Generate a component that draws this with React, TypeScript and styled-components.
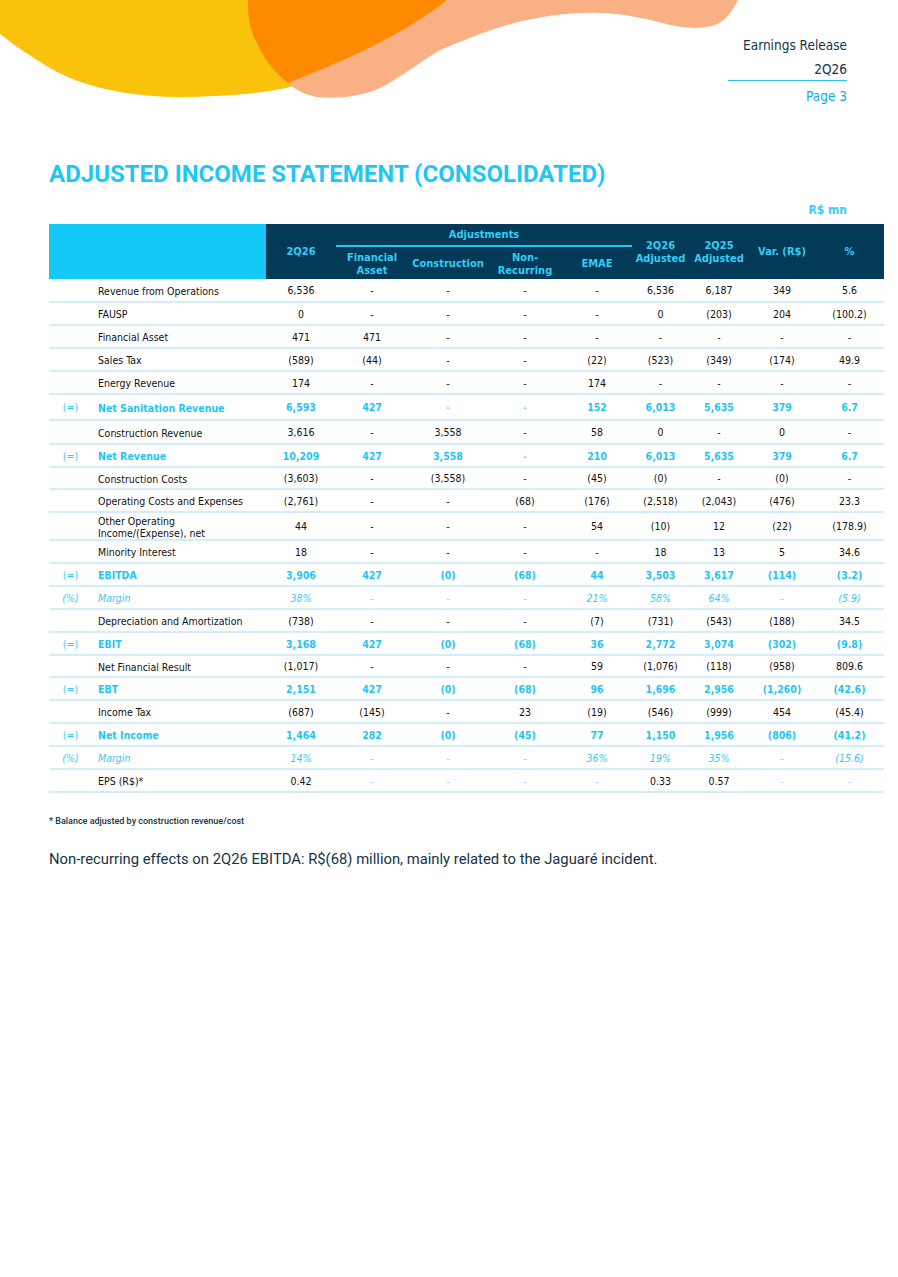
import React from 'react'
import styled, { createGlobalStyle } from 'styled-components'

const GlobalStyle = createGlobalStyle`
  body {
    margin: 0;
    background: #fff;
  }
`

const tableFont = `"DejaVu Sans Condensed", "Liberation Sans", sans-serif`
const cyan = '#1ec8f4'
const navy = '#023a58'

type Kind = 'plain' | 'total' | 'margin'

interface Row {
  prefix?: string
  label: string
  kind?: Kind
  softDash?: boolean
  tall?: number
  v: string[]
}

const rows: Row[] = [
  { label: 'Revenue from Operations', v: ['6,536', '-', '-', '-', '-', '6,536', '6,187', '349', '5.6'] },
  { label: 'FAUSP', v: ['0', '-', '-', '-', '-', '0', '(203)', '204', '(100.2)'] },
  { label: 'Financial Asset', v: ['471', '471', '-', '-', '-', '-', '-', '-', '-'] },
  { label: 'Sales Tax', v: ['(589)', '(44)', '-', '-', '(22)', '(523)', '(349)', '(174)', '49.9'] },
  { label: 'Energy Revenue', v: ['174', '-', '-', '-', '174', '-', '-', '-', '-'] },
  { prefix: '(=)', label: 'Net Sanitation Revenue', kind: 'total', tall: 26, v: ['6,593', '427', '-', '-', '152', '6,013', '5,635', '379', '6.7'] },
  { label: 'Construction Revenue', tall: 24, v: ['3,616', '-', '3,558', '-', '58', '0', '-', '0', '-'] },
  { prefix: '(=)', label: 'Net Revenue', kind: 'total', v: ['10,209', '427', '3,558', '-', '210', '6,013', '5,635', '379', '6.7'] },
  { label: 'Construction Costs', tall: 22, v: ['(3,603)', '-', '(3,558)', '-', '(45)', '(0)', '-', '(0)', '-'] },
  { label: 'Operating Costs and Expenses', v: ['(2,761)', '-', '-', '(68)', '(176)', '(2,518)', '(2,043)', '(476)', '23.3'] },
  { label: 'Other Operating\nIncome/(Expense), net', tall: 28, v: ['44', '-', '-', '-', '54', '(10)', '12', '(22)', '(178.9)'] },
  { label: 'Minority Interest', v: ['18', '-', '-', '-', '-', '18', '13', '5', '34.6'] },
  { prefix: '(=)', label: 'EBITDA', kind: 'total', v: ['3,906', '427', '(0)', '(68)', '44', '3,503', '3,617', '(114)', '(3.2)'] },
  { prefix: '(%)', label: 'Margin', kind: 'margin', v: ['38%', '-', '-', '-', '21%', '58%', '64%', '-', '(5.9)'] },
  { label: 'Depreciation and Amortization', v: ['(738)', '-', '-', '-', '(7)', '(731)', '(543)', '(188)', '34.5'] },
  { prefix: '(=)', label: 'EBIT', kind: 'total', v: ['3,168', '427', '(0)', '(68)', '36', '2,772', '3,074', '(302)', '(9.8)'] },
  { label: 'Net Financial Result', tall: 22, v: ['(1,017)', '-', '-', '-', '59', '(1,076)', '(118)', '(958)', '809.6'] },
  { prefix: '(=)', label: 'EBT', kind: 'total', v: ['2,151', '427', '(0)', '(68)', '96', '1,696', '2,956', '(1,260)', '(42.6)'] },
  { label: 'Income Tax', v: ['(687)', '(145)', '-', '23', '(19)', '(546)', '(999)', '454', '(45.4)'] },
  { prefix: '(=)', label: 'Net Income', kind: 'total', v: ['1,464', '282', '(0)', '(45)', '77', '1,150', '1,956', '(806)', '(41.2)'] },
  { prefix: '(%)', label: 'Margin', kind: 'margin', v: ['14%', '-', '-', '-', '36%', '19%', '35%', '-', '(15.6)'] },
  { label: 'EPS (R$)*', softDash: true, v: ['0.42', '-', '-', '-', '-', '0.33', '0.57', '-', '-'] },
]

const colWidths = [43, 174, 70, 72, 80, 74, 70, 57, 60, 66, 69]

const Blobs = () => (
  <BlobSvg width="740" height="100" viewBox="0 0 740 100">
    <path
      d="M0 0 H300 V84 C285 90 240 97 175 97 C125 96 80 86 50 68 C30 56 12 44 0 34 Z"
      fill="#f9c20b"
    />
    <path
      d="M248 0 H738 C733 10 726 22 712 26 C700 29 688 28 675 26 C650 20 630 14 600 13 C570 12 540 16 507 25 C480 33 460 42 440 50 C420 62 400 78 380 88 C360 97 335 99 317 97 C305 95 297 90 290 85 C270 70 255 45 250 25 C248 15 248 8 248 0 Z"
      fill="#f8b084"
    />
    <path
      d="M248 0 H447 C425 18 395 35 365 50 C340 62 310 74 288 83 C270 70 255 45 250 25 C248 15 248 8 248 0 Z"
      fill="#ff8a00"
    />
  </BlobSvg>
)

const App = () => {
  return (
    <Page>
      <GlobalStyle />
      <Header>
        <Blobs />
        <Release>
          <ReleaseLine>Earnings Release</ReleaseLine>
          <ReleaseLine underline>2Q26</ReleaseLine>
          <ReleaseLine accent>Page 3</ReleaseLine>
        </Release>
      </Header>

      <Content>
        <Title>ADJUSTED INCOME STATEMENT (CONSOLIDATED)</Title>
        <Unit>R$ mn</Unit>

        <Table>
          <colgroup>
            {colWidths.map((w, i) => (
              <col key={i} style={{ width: w }} />
            ))}
          </colgroup>
          <thead>
            <tr>
              <BlankHead colSpan={2} rowSpan={2} />
              <HeadCell rowSpan={2}>2Q26</HeadCell>
              <GroupHead colSpan={4}>Adjustments</GroupHead>
              <HeadCell rowSpan={2}>2Q26<br />Adjusted</HeadCell>
              <HeadCell rowSpan={2}>2Q25<br />Adjusted</HeadCell>
              <HeadCell rowSpan={2}>Var. (R$)</HeadCell>
              <HeadCell rowSpan={2}>%</HeadCell>
            </tr>
            <tr>
              <SubHead>Financial<br />Asset</SubHead>
              <SubHead>Construction</SubHead>
              <SubHead>Non-<br />Recurring</SubHead>
              <SubHead>EMAE</SubHead>
            </tr>
          </thead>
          <tbody>
            {rows.map((r, i) => {
              const kind = r.kind || 'plain'
              return (
                <BodyRow key={i} $h={r.tall || 23}>
                  <PrefixCell $kind={kind}>{r.prefix}</PrefixCell>
                  <LabelCell $kind={kind}>
                    {r.label.split('\n').map((l, j) => (
                      <div key={j}>{l}</div>
                    ))}
                  </LabelCell>
                  {r.v.map((val, j) => (
                    <ValueCell key={j} $kind={kind} $soft={val === '-' && (kind !== 'plain' || !!r.softDash)}>
                      {val}
                    </ValueCell>
                  ))}
                </BodyRow>
              )
            })}
          </tbody>
        </Table>

        <Footnote>* Balance adjusted by construction revenue/cost</Footnote>
        <Note>Non-recurring effects on 2Q26 EBITDA: R$(68) million, mainly related to the Jaguaré incident.</Note>
      </Content>
    </Page>
  )
}

export default App

const Page = styled.div`
  width: 898px;
  min-height: 1277px;
  background: #fff;
`

const Header = styled.header`
  display: grid;
  grid-template-areas: 'stack';
  height: 130px;
`

const BlobSvg = styled.svg`
  grid-area: stack;
  display: block;
`

const Release = styled.div`
  grid-area: stack;
  justify-self: end;
  display: flex;
  flex-direction: column;
  align-items: flex-end;
  padding: 33px 51px 0 0;
`

const ReleaseLine = styled.div<{ underline?: boolean; accent?: boolean }>`
  font-family: ${tableFont};
  font-size: 13.5px;
  line-height: 25px;
  height: 25px;
  color: ${(p) => (p.accent ? '#15a9de' : '#14344a')};
  ${(p) => p.underline && `width: 119px; text-align: right; border-bottom: 1px solid #2ac4ef; line-height: 22px; height: 22px; margin-bottom: 3px;`}
`

const Content = styled.main`
  padding: 0 14px 0 49px;
`

const Title = styled.h1`
  margin: 30px 0 0;
  font-family: Roboto, 'Liberation Sans', sans-serif;
  font-weight: 700;
  font-size: 24px;
  line-height: 28px;
  color: ${cyan};
`

const Unit = styled.div`
  margin-top: 14px;
  padding-right: 37px;
  text-align: right;
  font-family: ${tableFont};
  font-weight: 700;
  font-size: 12px;
  line-height: 16px;
  color: #3ccdf4;
`

const Table = styled.table`
  margin-top: 6px;
  width: 835px;
  table-layout: fixed;
  border-collapse: collapse;
  font-family: ${tableFont};
  font-size: 10.5px;
`

const BlankHead = styled.th`
  background: #14c8f8;
  padding: 0;
`

const HeadCell = styled.th`
  background: ${navy};
  color: #35cdf6;
  font-weight: 700;
  font-size: 11px;
  line-height: 13px;
  padding: 0;
  text-align: center;
  vertical-align: middle;
`

const GroupHead = styled(HeadCell)`
  height: 21px;
  border-bottom: 2px solid #1ec8f4;
`

const SubHead = styled(HeadCell)`
  height: 31px;
  padding-top: 1px;
`

const BodyRow = styled.tr<{ $h: number }>`
  height: ${(p) => p.$h}px;
  border-bottom: 2px solid #d3eef9;
`

const kindColor = (k: Kind) => (k === 'plain' ? '#111' : k === 'total' ? '#1fc5f2' : '#3ec6ee')

const PrefixCell = styled.td<{ $kind: Kind }>`
  padding: 0;
  text-align: center;
  color: ${(p) => (p.$kind === 'plain' ? '#111' : '#3ec6ee')};
  font-style: ${(p) => (p.$kind === 'margin' ? 'italic' : 'normal')};
`

const LabelCell = styled.td<{ $kind: Kind }>`
  padding: 1px 0 0 6px;
  line-height: 12px;
  color: ${(p) => kindColor(p.$kind)};
  font-weight: ${(p) => (p.$kind === 'total' ? 700 : 400)};
  font-style: ${(p) => (p.$kind === 'margin' ? 'italic' : 'normal')};
`

const ValueCell = styled.td<{ $kind: Kind; $soft: boolean }>`
  padding: 0;
  text-align: center;
  color: ${(p) => (p.$soft ? '#8fdbf3' : kindColor(p.$kind))};
  font-weight: ${(p) => (p.$kind === 'total' ? 700 : 400)};
  font-style: ${(p) => (p.$kind === 'margin' ? 'italic' : 'normal')};
`

const Footnote = styled.div`
  margin-top: 23px;
  font-family: Roboto, 'Liberation Sans', sans-serif;
  font-weight: 500;
  font-size: 9px;
  color: #14344a;
`

const Note = styled.p`
  margin: 24px 0 0;
  font-family: Roboto, 'Liberation Sans', sans-serif;
  font-size: 14.8px;
  color: #14344a;
`
